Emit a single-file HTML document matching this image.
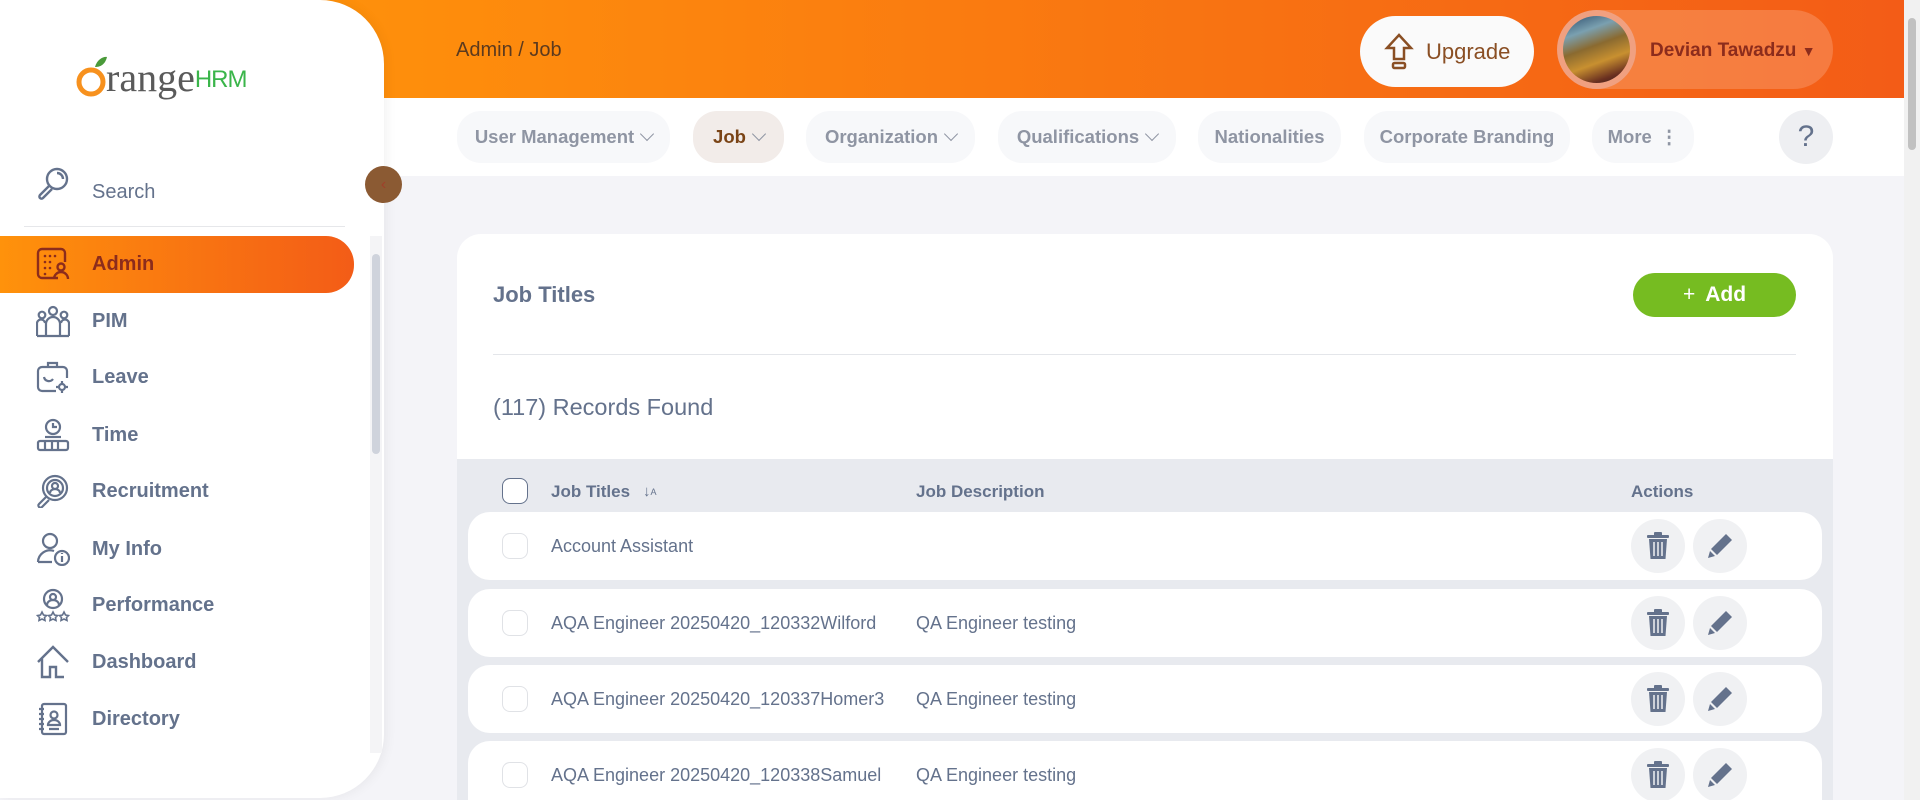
<!DOCTYPE html>
<html style="overflow:hidden;height:800px"><head><meta charset="utf-8"><style>
*{box-sizing:border-box;margin:0;padding:0}
body{width:1920px;height:800px;overflow:hidden;background:#f4f4f8;font-family:"Liberation Sans",sans-serif;position:relative}
.clip{position:absolute;left:0;top:0;width:1920px;height:800px;overflow:hidden}
.hdr{position:absolute;left:0;top:0;width:1904px;height:98px;background:linear-gradient(90deg,#ff920b 15%,#f35c17 100%)}
.nav{position:absolute;left:0;top:98px;width:1904px;height:78px;background:#fff}
.side{position:absolute;left:0;top:0;width:384px;height:798px;background:#fff;border-radius:0 64px 64px 0;box-shadow:2px 0 12px rgba(0,0,0,.06)}
.crumb{position:absolute;left:456px;top:39px;font-size:20px;color:#5c3a1e}
.upg{position:absolute;left:1360px;top:16px;width:174px;height:71px;border-radius:36px;background:#fafafa;color:#8a4f24;font-size:22px;display:flex;align-items:center;padding-left:24px}
.upg span{margin-left:12px}
.user{position:absolute;left:1558px;top:10px;width:275px;height:79px;border-radius:40px;background:rgba(255,255,255,.18);}
.av{position:absolute;left:-1px;top:0;width:79px;height:79px;border-radius:50%;background:#f0a080;padding:6px}
.av div{width:100%;height:100%;border-radius:50%;background:linear-gradient(160deg,#2a4a6a 0,#7aa0b0 25%,#8a6a30 45%,#c89030 65%,#6a3020 85%,#2a1a1a 100%)}
.uname{position:absolute;left:92px;top:30px;font-size:19px;font-weight:bold;color:#8c2c1c}
.tab{position:absolute;top:111px;height:52px;border-radius:24px;background:#f7f8fa;color:#8f95a3;font-size:18.5px;font-weight:bold;display:flex;align-items:center;justify-content:center}
.chev{display:inline-block;width:10px;height:10px;border-right:1.5px solid #8f95a3;border-bottom:1.5px solid #8f95a3;transform:rotate(45deg);margin:-6px 0 0 8px}
.help{position:absolute;left:1779px;top:110px;width:54px;height:54px;border-radius:50%;background:#eeeff2;color:#64728c;font-size:30px;display:flex;align-items:center;justify-content:center}
.card{position:absolute;left:457px;top:234px;width:1376px;height:566px;background:#fff;border-radius:24px 24px 0 0;overflow:hidden}
.card h2{position:absolute;left:36px;top:48px;font-size:22px;color:#64728c;font-weight:bold}
.add{position:absolute;left:1176px;top:39px;width:163px;height:44px;border-radius:22px;background:#76bc21;color:#fff;font-weight:bold;font-size:21px;display:flex;align-items:center;justify-content:center}
.div{position:absolute;left:36px;top:120px;width:1303px;height:1px;background:#e4e6ea}
.rec{position:absolute;left:36px;top:160px;font-size:23.5px;color:#64728c}
.thead{position:absolute;left:0;top:225px;width:1376px;height:341px;background:#e8eaef}
.th{position:absolute;top:248px;font-size:17px;font-weight:bold;color:#64728c;line-height:20px}
.cb{position:absolute;width:26px;height:26px;border:1.5px solid #d5d8de;border-radius:8px;background:#fff}
.ab{position:absolute;top:7px;width:54px;height:54px;border-radius:50%;background:#f0f1f3;display:flex;align-items:center;justify-content:center}
.mi{position:absolute;left:36px;height:40px;width:340px;display:flex;align-items:center;font-size:20px;font-weight:bold;color:#64728c}
.mi svg{width:34px;height:34px;margin-right:22px}
.rw{position:absolute;left:468px;width:1354px;height:68px;background:#fff;border-radius:22px;overflow:hidden}
.rw .t{position:absolute;left:83px;top:24px;font-size:18px;color:#64728c}
.rw .d{position:absolute;left:448px;top:24px;font-size:18px;color:#64728c}
.rw .cb{left:34px;top:21px;border-color:#e0e2e6}
</style></head><body><div class="clip">
<div class="hdr"></div>
<div class="nav"></div>
<div class="crumb">Admin / Job</div>
<div class="upg"><svg width="30" height="40" viewBox="0 0 30 40" fill="none" stroke="#8a4f24" stroke-width="2.5"><path d="M15 3 L27 16 H20 V27 H10 V16 H3 Z"/><rect x="9" y="31" width="12" height="5" rx="1.5"/></svg><span>Upgrade</span></div>
<div class="user"><div class="av"><div></div></div><div class="uname">Devian Tawadzu <span style="font-size:14px">&#9660;</span></div></div>

<div class="tab" style="left:457px;width:213px">User Management<i class="chev"></i></div>
<div class="tab" style="left:693px;width:91px;background:#f2ece9;color:#7a4416">Job<i class="chev"></i></div>
<div class="tab" style="left:806px;width:169px">Organization<i class="chev"></i></div>
<div class="tab" style="left:998px;width:178px">Qualifications<i class="chev"></i></div>
<div class="tab" style="left:1198px;width:143px">Nationalities</div>
<div class="tab" style="left:1364px;width:206px">Corporate Branding</div>
<div class="tab" style="left:1592px;width:102px">More <span style="margin-left:8px">&#8942;</span></div>
<div class="help">?</div>

<div class="card">
<h2>Job Titles</h2>
<div class="add"><span style="font-weight:normal;margin-right:10px">+</span>Add</div>
<div class="div"></div>
<div class="rec">(117) Records Found</div>
<div class="thead"></div>
<div class="cb" style="left:45px;top:244px;border-color:#64728c"></div>
<div class="th" style="left:94px">Job Titles</div>
<div class="th" style="left:186px;font-weight:normal;font-size:15px">&#8595;<span style="font-size:9px;vertical-align:top">A</span></div>
<div class="th" style="left:459px">Job Description</div>
<div class="th" style="left:1174px">Actions</div>
</div>

<div class="rw" style="top:512px"><div class="cb"></div><div class="t">Account Assistant</div>
<div class="ab" style="left:1163px"><svg width="22" height="28" viewBox="0 0 22 28" fill="#64728c"><rect x="0" y="3" width="22" height="3" rx="1"/><rect x="7" y="0" width="8" height="4" rx="1"/><path d="M2 7h18l-1.5 20h-15z"/><path d="M7 10v14M11 10v14M15 10v14" stroke="#f0f1f3" stroke-width="1.5"/></svg></div>
<div class="ab" style="left:1225px"><svg width="28" height="28" viewBox="0 0 28 28" fill="#64728c"><path d="M20 2l6 6-15 15-6-6z"/><path d="M4 19l5 5-7 2z"/></svg></div></div>
<div class="rw" style="top:589px"><div class="cb"></div><div class="t">AQA Engineer 20250420_120332Wilford</div><div class="d">QA Engineer testing</div>
<div class="ab" style="left:1163px"><svg width="22" height="28" viewBox="0 0 22 28" fill="#64728c"><rect x="0" y="3" width="22" height="3" rx="1"/><rect x="7" y="0" width="8" height="4" rx="1"/><path d="M2 7h18l-1.5 20h-15z"/><path d="M7 10v14M11 10v14M15 10v14" stroke="#f0f1f3" stroke-width="1.5"/></svg></div>
<div class="ab" style="left:1225px"><svg width="28" height="28" viewBox="0 0 28 28" fill="#64728c"><path d="M20 2l6 6-15 15-6-6z"/><path d="M4 19l5 5-7 2z"/></svg></div></div>
<div class="rw" style="top:665px"><div class="cb"></div><div class="t">AQA Engineer 20250420_120337Homer3</div><div class="d">QA Engineer testing</div>
<div class="ab" style="left:1163px"><svg width="22" height="28" viewBox="0 0 22 28" fill="#64728c"><rect x="0" y="3" width="22" height="3" rx="1"/><rect x="7" y="0" width="8" height="4" rx="1"/><path d="M2 7h18l-1.5 20h-15z"/><path d="M7 10v14M11 10v14M15 10v14" stroke="#f0f1f3" stroke-width="1.5"/></svg></div>
<div class="ab" style="left:1225px"><svg width="28" height="28" viewBox="0 0 28 28" fill="#64728c"><path d="M20 2l6 6-15 15-6-6z"/><path d="M4 19l5 5-7 2z"/></svg></div></div>
<div class="rw" style="top:741px;height:59px;border-radius:22px 22px 0 0"><div class="cb"></div><div class="t">AQA Engineer 20250420_120338Samuel</div><div class="d">QA Engineer testing</div>
<div class="ab" style="left:1163px"><svg width="22" height="28" viewBox="0 0 22 28" fill="#64728c"><rect x="0" y="3" width="22" height="3" rx="1"/><rect x="7" y="0" width="8" height="4" rx="1"/><path d="M2 7h18l-1.5 20h-15z"/><path d="M7 10v14M11 10v14M15 10v14" stroke="#f0f1f3" stroke-width="1.5"/></svg></div>
<div class="ab" style="left:1225px"><svg width="28" height="28" viewBox="0 0 28 28" fill="#64728c"><path d="M20 2l6 6-15 15-6-6z"/><path d="M4 19l5 5-7 2z"/></svg></div></div>

<div style="position:absolute;left:1904px;top:0;width:16px;height:800px;background:#f1f1f1"><div style="position:absolute;left:4px;top:18px;width:8px;height:132px;border-radius:4px;background:#c1c1c1"></div></div>

<div class="side">
<div style="position:absolute;left:76px;top:48px;height:50px;display:flex;align-items:flex-end">
<svg width="34" height="44" viewBox="0 0 34 44" style="margin-bottom:1px"><circle cx="15" cy="29" r="12" fill="none" stroke="#f7911e" stroke-width="5"/><path d="M19 14 C21 6 28 3 31 4 C29 12 24 14 19 14Z" fill="#4a9a3a"/></svg>
<span style="font-family:'Liberation Serif',serif;font-size:40px;color:#5a5a5a;line-height:1;margin-left:-4px">range</span><span style="font-size:24px;color:#3ab54a;line-height:1;margin-bottom:6px;letter-spacing:-1px">HRM</span></div>
<div style="position:absolute;left:36px;top:166px;display:flex;align-items:center"><svg width="34" height="38" viewBox="0 0 34 38" fill="none" stroke="#64728c" stroke-width="2.4"><circle cx="21" cy="13" r="10"/><path d="M21 7a6 6 0 0 1 6 6" /><path d="M13 20 L4 29 a2 2 0 0 0 3 3 L16 23"/></svg><span style="margin-left:22px;font-size:20px;color:#64728c;margin-top:14px">Search</span></div>
<div style="position:absolute;left:24px;top:226px;width:321px;height:1px;background:#e6e7ea"></div>
<div style="position:absolute;left:0;top:236px;width:354px;height:57px;border-radius:0 28px 28px 0;background:linear-gradient(90deg,#ff920b,#f35c17)"></div>
<div class="mi" style="top:244px;color:#8c2c1c"><svg viewBox="0 0 34 34" fill="none" stroke="#8c2c1c" stroke-width="2.4"><path d="M22 31H6a4 4 0 0 1-4-4V6a4 4 0 0 1 4-4h19a4 4 0 0 1 4 4v9"/><circle cx="25" cy="20" r="3.5"/><path d="M18 32a7 7 0 0 1 14 0"/><g fill="#8c2c1c" stroke="none"><circle cx="9" cy="9" r="1.3"/><circle cx="14" cy="9" r="1.3"/><circle cx="19" cy="9" r="1.3"/><circle cx="9" cy="15" r="1.3"/><circle cx="14" cy="15" r="1.3"/><circle cx="9" cy="21" r="1.3"/><circle cx="14" cy="21" r="1.3"/><circle cx="9" cy="27" r="1.3"/></g></svg>Admin</div>
<div class="mi" style="top:301px"><svg viewBox="0 0 34 34" fill="none" stroke="#64728c" stroke-width="2.2"><circle cx="17" cy="7" r="4"/><circle cx="6" cy="11" r="3.3"/><circle cx="28" cy="11" r="3.3"/><path d="M10 32V20a7 7 0 0 1 14 0v12zM1 32V20a4 4 0 0 1 8-1M33 32V20a4 4 0 0 0-8-1M1 32h32"/></svg>PIM</div>
<div class="mi" style="top:357px"><svg viewBox="0 0 34 34" fill="none" stroke="#64728c" stroke-width="2.2"><path d="M12 7V3h9v4"/><path d="M20 31H6a4 4 0 0 1-4-4V11a4 4 0 0 1 4-4h21a4 4 0 0 1 4 4v7"/><path d="M8 17a5 5 0 0 0 9 2"/><circle cx="26" cy="27" r="3"/><path d="M26 21v2M26 31v2M20 27h2M30 27h2"/></svg>Leave</div>
<div class="mi" style="top:415px"><svg viewBox="0 0 34 34" fill="none" stroke="#64728c" stroke-width="2.2"><circle cx="17" cy="9" r="7"/><path d="M17 5v4h4"/><path d="M9 19h16"/><rect x="2" y="23" width="30" height="9" rx="2"/><path d="M9 23v9M16 23v9M22 23v9"/></svg>Time</div>
<div class="mi" style="top:471px"><svg viewBox="0 0 34 34" fill="none" stroke="#64728c" stroke-width="2.2"><circle cx="19" cy="14" r="12"/><circle cx="19" cy="14" r="8"/><circle cx="19" cy="12" r="3"/><path d="M14 19a5 4 0 0 1 10 0"/><path d="M10 23L3 30a2 2 0 0 0 3 3l7-7"/></svg>Recruitment</div>
<div class="mi" style="top:529px"><svg viewBox="0 0 34 34" fill="none" stroke="#64728c" stroke-width="2.2"><circle cx="14" cy="9" r="7"/><path d="M2 30a12 12 0 0 1 16-11M2 30h14"/><circle cx="26" cy="26" r="7"/><path d="M26 24v6M26 21v1"/></svg>My Info</div>
<div class="mi" style="top:585px"><svg viewBox="0 0 34 34" fill="none" stroke="#64728c" stroke-width="2.2"><circle cx="17" cy="11" r="9"/><circle cx="17" cy="9" r="3"/><path d="M11 17a6 5 0 0 1 12 0"/><path d="M6 24l1.5 3 3 .5-2 2 .5 3-3-1.5-3 1.5.5-3-2-2 3-.5zM17 24l1.5 3 3 .5-2 2 .5 3-3-1.5-3 1.5.5-3-2-2 3-.5zM28 24l1.5 3 3 .5-2 2 .5 3-3-1.5-3 1.5.5-3-2-2 3-.5z" stroke-width="1.6"/></svg>Performance</div>
<div class="mi" style="top:642px"><svg viewBox="0 0 34 34" fill="none" stroke="#64728c" stroke-width="2.4"><path d="M2 17L17 2l15 15M6 13v19h8V22h6v10h8"/></svg>Dashboard</div>
<div class="mi" style="top:699px"><svg viewBox="0 0 34 34" fill="none" stroke="#64728c" stroke-width="2.2"><rect x="6" y="2" width="24" height="30" rx="2"/><path d="M3 7h5M3 12h5M3 17h5M3 22h5M3 27h5"/><circle cx="18" cy="13" r="3.5"/><path d="M12 23a6 5 0 0 1 12 0zM13 27h10"/></svg>Directory</div>
<div style="position:absolute;left:370px;top:236px;width:12px;height:517px;background:#f4f4f6"><div style="position:absolute;left:2px;top:18px;width:8px;height:200px;border-radius:4px;background:#cfd3dc"></div></div>
</div>
<div style="position:absolute;left:365px;top:166px;width:37px;height:37px;border-radius:50%;background:#8b5a33;color:#a0402a;font-size:16px;display:flex;align-items:center;justify-content:center">&#8249;</div>
</div></body></html>
